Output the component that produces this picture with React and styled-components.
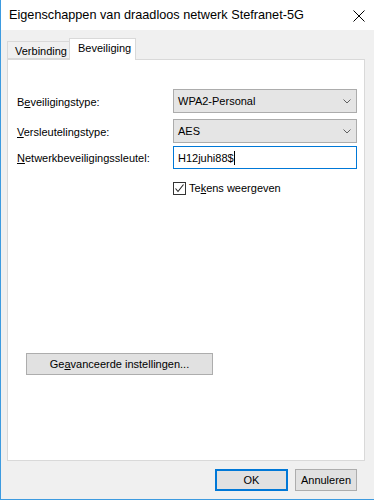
import React from 'react';
import styled, { createGlobalStyle } from 'styled-components';

const GlobalStyle = createGlobalStyle`
  html, body {
    margin: 0;
    padding: 0;
    background: #ffffff;
  }
  body {
    font-family: "Segoe UI", "Liberation Sans", Arial, sans-serif;
    font-size: 11px;
    color: #000000;
  }
`;

const App = () => {
  return (
    <>
      <GlobalStyle />
      <Window>
        <TitleBar>
          <Title>Eigenschappen van draadloos netwerk Stefranet-5G</Title>
          <CloseIcon width="12" height="12" viewBox="0 0 12 12">
            <path d="M0.5 0.5 L11.5 11.5 M11.5 0.5 L0.5 11.5" stroke="#000" strokeWidth="1" fill="none" />
          </CloseIcon>
        </TitleBar>
        <Body>
          <Tabs>
            <Tab $w={63}>Verbinding</Tab>
            <Tab $active $w={67}>Beveiliging</Tab>
          </Tabs>
          <Panel>
            <Row>
              <Label>
                B<u>e</u>veiligingstype:
              </Label>
              <Select>
                WPA2-Personal
                <Chevron />
              </Select>
            </Row>
            <Row $mt={6}>
              <Label>
                <u>V</u>ersleutelingstype:
              </Label>
              <Select>
                AES
                <Chevron />
              </Select>
            </Row>
            <Row $mt={3}>
              <Label>
                <u>N</u>etwerkbeveiligingssleutel:
              </Label>
              <TextInput>
                H12juhi88$<Caret />
              </TextInput>
            </Row>
            <CheckRow>
              <CheckBox>
                <svg width="11" height="11" viewBox="0 0 11 11">
                  <path d="M1.5 5.5 L4 8.5 L9.5 1.5" stroke="#222" strokeWidth="1.1" fill="none" />
                </svg>
              </CheckBox>
              <span>
                Te<u>k</u>ens weergeven
              </span>
            </CheckRow>
            <AdvancedButton>
              Ge<u>a</u>vanceerde instellingen...
            </AdvancedButton>
          </Panel>
          <Footer>
            <DialogButton $default $w={73}>OK</DialogButton>
            <DialogButton $w={62}>Annuleren</DialogButton>
          </Footer>
        </Body>
      </Window>
    </>
  );
};

export default App;

const Chevron = () => (
  <ChevronIcon width="8" height="5" viewBox="0 0 8 5">
    <path d="M0.5 0.5 L4 4 L7.5 0.5" stroke="#606060" strokeWidth="1" fill="none" />
  </ChevronIcon>
);

const Window = styled.div`
  width: 374px;
  height: 500px;
  box-sizing: border-box;
  border-left: 1px solid #3d9be0;
  border-bottom: 1px solid #3d9be0;
  background: #f0f0f0;
  display: flex;
  flex-direction: column;
`;

const TitleBar = styled.div`
  height: 30px;
  flex: 0 0 30px;
  background: #ffffff;
  display: flex;
  align-items: center;
  justify-content: space-between;
  padding: 0 9px 0 8px;
`;

const Title = styled.div`
  font-size: 12.7px;
  line-height: 16px;
`;

const CloseIcon = styled.svg`
  display: block;
  margin-top: 1px;
`;

const Body = styled.div`
  padding: 8px 0 0 6px;
  display: flex;
  flex-direction: column;
`;

const Tabs = styled.div`
  display: flex;
  align-items: flex-end;
  height: 21px;
`;

const Tab = styled.div`
  box-sizing: border-box;
  width: ${(p) => p.$w}px;
  border: 1px solid #d9d9d9;
  background: ${(p) => (p.$active ? '#ffffff' : '#f0f0f0')};
  height: ${(p) => (p.$active ? '22px' : '18px')};
  padding: ${(p) => (p.$active ? '2px 0 0 8px' : '2px 0 0 7px')};
  border-bottom: ${(p) => (p.$active ? 'none' : '1px solid #d9d9d9')};
  margin-bottom: ${(p) => (p.$active ? '-1px' : '0')};
  margin-left: ${(p) => (p.$active ? '-1px' : '0')};
  position: relative;
  z-index: ${(p) => (p.$active ? 2 : 1)};
  line-height: 14px;
  font-size: 11px;
`;

const Panel = styled.div`
  box-sizing: border-box;
  width: 358px;
  height: 402px;
  background: #ffffff;
  border: 1px solid #d9d9d9;
  padding: 29px 0 0 9px;
  display: flex;
  flex-direction: column;
`;

const Row = styled.div`
  display: grid;
  grid-template-columns: 156px 184px;
  align-items: center;
  margin-top: ${(p) => p.$mt || 0}px;
`;

const Label = styled.div`
  font-size: 11px;
  line-height: 16px;
  padding-top: 1px;
`;

const Select = styled.div`
  box-sizing: border-box;
  height: 24px;
  background: #e5e5e5;
  border: 1px solid #acacac;
  display: flex;
  align-items: center;
  justify-content: space-between;
  padding: 0 5px 0 4px;
  font-size: 11px;
`;

const ChevronIcon = styled.svg`
  display: block;
`;

const TextInput = styled.div`
  box-sizing: border-box;
  height: 23px;
  background: #ffffff;
  border: 1px solid #0078d7;
  display: flex;
  align-items: center;
  padding: 0 0 0 4px;
  font-size: 11px;
`;

const Caret = styled.span`
  display: inline-block;
  width: 1px;
  height: 14px;
  background: #000;
`;

const CheckRow = styled.div`
  display: flex;
  align-items: center;
  margin: 11px 0 0 156px;
  gap: 3px;
  font-size: 11px;
  line-height: 16px;
`;

const CheckBox = styled.div`
  box-sizing: border-box;
  width: 13px;
  height: 13px;
  border: 1px solid #333333;
  background: #ffffff;
  display: flex;
  align-items: center;
  justify-content: center;
`;

const AdvancedButton = styled.div`
  box-sizing: border-box;
  width: 187px;
  height: 22px;
  margin: 157px 0 0 9px;
  background: #e1e1e1;
  border: 1px solid #adadad;
  display: flex;
  align-items: center;
  justify-content: center;
  font-size: 11px;
`;

const Footer = styled.div`
  display: flex;
  justify-content: flex-end;
  gap: 7px;
  padding: 8px 17px 0 0;
`;

const DialogButton = styled.div`
  box-sizing: border-box;
  width: ${(p) => p.$w}px;
  height: 22px;
  background: #e1e1e1;
  border: ${(p) => (p.$default ? '2px solid #0078d7' : '1px solid #adadad')};
  display: flex;
  align-items: center;
  justify-content: center;
  font-size: 11px;
`;
